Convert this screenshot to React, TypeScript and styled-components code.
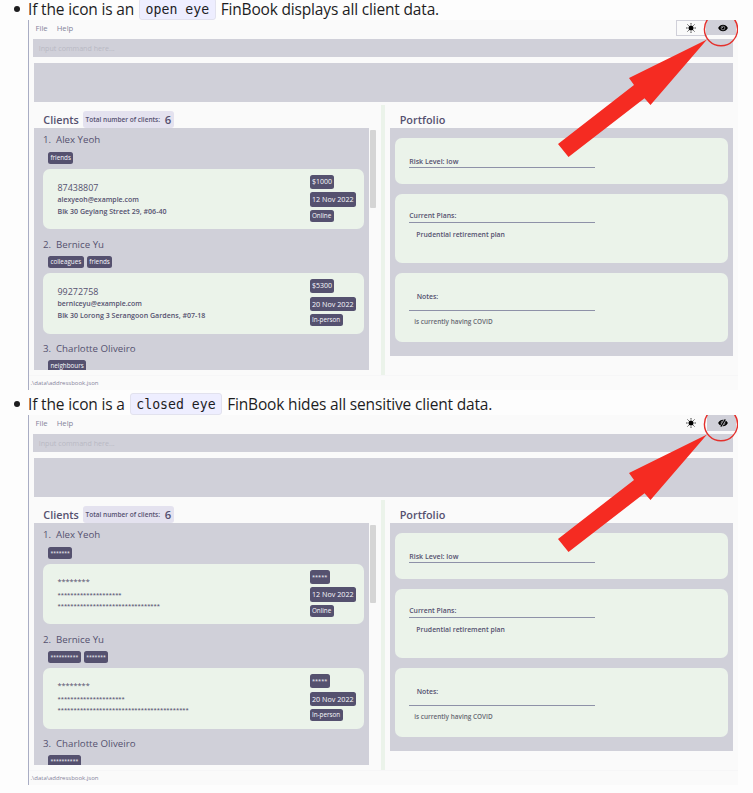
import React from "react";
import styled, { createGlobalStyle } from "styled-components";

const ink = "#55516f";
const slate = "#d0d0d9";
const mint = "#ebf3ea";

const GlobalStyle = createGlobalStyle`
  body {
    margin: 0;
    background: #fdfdfd;
    font-family: "Open Sans", "Noto Sans", sans-serif;
    overflow: hidden;
  }
  *, *::before, *::after { box-sizing: border-box; }
`;

const Page = styled.main`
  width: 753px;
  height: 793px;
`;

const Guide = styled.ul`
  list-style: none;
  margin: 0;
  padding: 0 0 0 28px;
`;

const Step = styled.li<{ $height: number }>`
  height: ${(p) => p.$height}px;
  display: flex;
  flex-direction: column;
  justify-content: flex-end;
`;

const Sentence = styled.p`
  display: flex;
  align-items: center;
  margin: 0 0 0.5px -14px;
  height: 21px;
  font-size: 15.5px;
  line-height: 21px;
  letter-spacing: -0.17px;
  color: #1d1d1f;
  white-space: pre;
`;

const Bullet = styled.span`
  width: 6px;
  height: 6px;
  border-radius: 50%;
  background: #1d1d1f;
  margin-right: 8px;
`;

const Code = styled.code`
  height: 21.5px;
  margin: 0 5px;
  padding: 1px 5.5px 0;
  border: 1px solid #e2e2ee;
  border-radius: 3px;
  background: #eeeeff;
  font: 13.2px/20.5px "DejaVu Sans Mono", monospace;
  letter-spacing: 0;
`;

const Shot = styled.section`
  position: relative;
  flex: none;
  width: 710px;
  height: 370px;
  overflow: hidden;
  display: flex;
  flex-direction: column;
  border-left: 1px solid #a9adc4;
  background: #fafafa;
  color: ${ink};
`;

const MenuBar = styled.nav`
  height: 19px;
  display: flex;
  align-items: flex-start;
  gap: 9px;
  padding: 0 1.7px 0 6.5px;
  font-size: 7.7px;
  line-height: 16px;
  color: #85849b;
`;

const Toggles = styled.div`
  margin-left: auto;
  display: flex;
`;

const ThemeToggle = styled.div<{ $outlined: boolean }>`
  width: 31.5px;
  height: 15.6px;
  padding-left: 8.2px;
  border: 1px solid ${(p) => (p.$outlined ? slate : "transparent")};
  svg { display: block; margin-top: 1px; }
`;

const EyeToggle = styled.div<{ $height: number }>`
  width: 29px;
  height: ${(p) => p.$height}px;
  padding-left: 10.2px;
  background: ${slate};
  svg { display: block; margin-top: 3px; }
`;

const CommandBox = styled.div`
  height: 17.7px;
  margin: 0 5px 0 4px;
  padding-left: 5.7px;
  background: ${slate};
  font-size: 7.15px;
  line-height: 18.5px;
  color: #b9b9c4;
`;

const ResultBox = styled.div`
  height: 39.2px;
  margin: 6.4px 5.3px 3.4px 5px;
  background: ${slate};
`;

const Body = styled.div`
  height: 270.6px;
  display: flex;
`;

const ClientsPane = styled.div`
  width: 352.3px;
  padding-left: 5px;
`;

const PaneHeader = styled.header<{ $indent: number }>`
  height: 22.9px;
  padding: 5.9px 0 0 ${(p) => p.$indent}px;
  display: flex;
  gap: 4.2px;
`;

const PaneTitle = styled.h2<{ $size: number }>`
  margin: 0;
  font-size: ${(p) => p.$size}px;
  font-weight: 600;
  line-height: 17px;
`;

const Total = styled.div`
  height: 17px;
  width: 91px;
  padding-left: 2.6px;
  display: flex;
  gap: 4.7px;
  border-radius: 3px;
  background: #e4e2ef;
  font-size: 6.5px;
  font-weight: 600;
  line-height: 17.4px;
`;

const Count = styled.span`
  font-size: 11.3px;
  line-height: 17.4px;
`;

const ListRow = styled.div`
  display: flex;
  gap: 1px;
`;

const ClientList = styled.div`
  width: 335px;
  height: 241.7px;
  overflow: hidden;
  background: ${slate};
`;

const ScrollThumb = styled.div`
  width: 5.5px;
  height: 78px;
  margin-top: 2px;
  border-radius: 1px;
  background: #d5d5d5;
`;

const ClientItem = styled.article`
  height: 104.3px;
  padding: 0 5px 0 9px;
`;

const ClientName = styled.h3`
  display: flex;
  margin: 0;
  height: 23.3px;
  font-size: 9.7px;
  font-weight: 400;
  line-height: 24.4px;
`;

const Index = styled.span`
  width: 13px;
`;

const Tags = styled.div`
  display: flex;
  gap: 3.3px;
  height: 17.2px;
  padding-left: 5px;
`;

const Chip = styled.span<{ $size: number; $h: number; $masked?: boolean }>`
  height: ${(p) => p.$h}px;
  padding: 0 2.4px;
  border-radius: 2.5px;
  background: ${ink};
  color: #f8f8fc;
  font-size: ${(p) => p.$size}px;
  font-weight: 500;
  line-height: ${(p) => p.$h - 0.1 + (p.$masked ? 0.8 : 0)}px;
  white-space: nowrap;
`;

const ClientCard = styled.div`
  height: 60.5px;
  display: flex;
  border-radius: 7px;
  background: ${mint};
`;

const Details = styled.div`
  width: 266.5px;
  padding: 12px 0 0 14.5px;
`;

const Detail = styled.div<{ $size: number; $h: number; $weight?: number }>`
  height: ${(p) => p.$h}px;
  font-size: ${(p) => p.$size}px;
  font-weight: ${(p) => p.$weight ?? 600};
  line-height: ${(p) => p.$h}px;
  white-space: nowrap;
`;

const Meetings = styled.div`
  padding-top: 6px;
  display: flex;
  flex-direction: column;
  align-items: flex-start;
  gap: 3.2px;
`;

const Divider = styled.div`
  width: 4px;
  background: ${mint};
`;

const PortfolioPane = styled.div`
  flex: 1;
  padding: 0 5.3px 0 5.2px;
`;

const PortfolioPanel = styled.div`
  height: 227.5px;
  padding: 9.8px 4.7px 0 4.7px;
  display: flex;
  flex-direction: column;
  gap: 9.6px;
  background: ${slate};
`;

const PortfolioCard = styled.div<{ $h: number; $top: number }>`
  height: ${(p) => p.$h}px;
  padding: ${(p) => p.$top}px 0 0 14px;
  border-radius: 7px;
  background: ${mint};
`;

const Label = styled.div<{ $size: number; $h: number; $indent?: number }>`
  width: 186px;
  height: ${(p) => p.$h}px;
  padding-left: ${(p) => p.$indent ?? 0}px;
  border-bottom: 1px solid #8e91a8;
  font-size: ${(p) => p.$size}px;
  font-weight: 600;
  line-height: 10px;
`;

const Value = styled.div<{ $size: number; $indent: number; $top: number; $soft?: boolean }>`
  padding: ${(p) => p.$top}px 0 0 ${(p) => p.$indent}px;
  font-size: ${(p) => p.$size}px;
  font-weight: 600;
  line-height: 10px;
  color: ${(p) => (p.$soft ? "#676972" : ink)};
`;

const StatusBar = styled.footer`
  flex: 1;
  border-top: 1px solid #f6f6f7;
  padding-left: 1.5px;
  font-size: 6px;
  line-height: 14px;
  color: #85849b;
`;

const Annotation = styled.svg`
  position: absolute;
  top: 0;
  right: 0;
  width: 184px;
  height: 140px;
`;

function SunIcon() {
  return (
    <svg width="12" height="12" viewBox="-6 -6 12 12">
      <circle r="2.5" />
      {[0, 45, 90, 135, 180, 225, 270, 315].map((a) => (
        <path key={a} d="M3.5 0H4.8" stroke="#000" strokeWidth="0.9" transform={`rotate(${a})`} />
      ))}
    </svg>
  );
}

function EyeIcon({ closed }: { closed: boolean }) {
  return (
    <svg width="10" height="10" viewBox="-5 -5 10 10">
      <path d="M-4.9 0C-3.6 -2.2 -1.9 -3.2 0 -3.2S3.6 -2.2 4.9 0C3.6 2.2 1.9 3.2 0 3.2S-3.6 2.2 -4.9 0Z" />
      <circle r="1.9" fill="none" stroke={slate} strokeWidth="0.6" />
      {closed ? (
        <>
          <path d="M-2.4 4L2.7 -4.2" stroke={slate} strokeWidth="2.3" />
          <path d="M-2.2 3.6L2.3 -3.6" stroke="#000" strokeWidth="1.2" />
        </>
      ) : (
        <circle cx="-0.4" cy="-0.4" r="0.5" fill={slate} />
      )}
    </svg>
  );
}

type Client = {
  name: string;
  tags: string[];
  phone: string;
  email: string;
  address: string;
  premium: string;
  date: string;
  medium: string;
};

const clients: Client[] = [
  {
    name: "Alex Yeoh",
    tags: ["friends"],
    phone: "87438807",
    email: "alexyeoh@example.com",
    address: "Blk 30 Geylang Street 29, #06-40",
    premium: "$1000",
    date: "12 Nov 2022",
    medium: "Online",
  },
  {
    name: "Bernice Yu",
    tags: ["colleagues", "friends"],
    phone: "99272758",
    email: "berniceyu@example.com",
    address: "Blk 30 Lorong 3 Serangoon Gardens, #07-18",
    premium: "$5300",
    date: "20 Nov 2022",
    medium: "In-person",
  },
];

function FinBook({ hidden }: { hidden: boolean }) {
  const mask = (s: string) => (hidden ? "*".repeat(s.length) : s);
  const tag = (t: string) => (
    <Chip key={t} $size={hidden ? 5.05 : 6.3} $h={12.4} $masked={hidden}>
      {mask(t)}
    </Chip>
  );
  return (
    <Shot>
      <MenuBar>
        <span>File</span>
        <span>Help</span>
        <Toggles>
          <ThemeToggle $outlined={!hidden}>
            <SunIcon />
          </ThemeToggle>
          <EyeToggle $height={hidden ? 16 : 15}>
            <EyeIcon closed={hidden} />
          </EyeToggle>
        </Toggles>
      </MenuBar>
      <CommandBox>Input command here...</CommandBox>
      <ResultBox />
      <Body>
        <ClientsPane>
          <PaneHeader $indent={9.3}>
            <PaneTitle $size={10.8}>Clients</PaneTitle>
            <Total>
              Total number of clients: <Count>6</Count>
            </Total>
          </PaneHeader>
          <ListRow>
            <ClientList>
              {clients.map((c, i) => (
                <ClientItem key={c.name}>
                  <ClientName>
                    <Index>{i + 1}.</Index>
                    {c.name}
                  </ClientName>
                  <Tags>{c.tags.map(tag)}</Tags>
                  <ClientCard>
                    <Details>
                      <Detail $size={hidden ? 7.3 : 8.95} $h={13} $weight={500}>{mask(c.phone)}</Detail>
                      <Detail $size={hidden ? 5.85 : 6.95} $h={12.4}>{mask(c.email)}</Detail>
                      <Detail $size={hidden ? 5.85 : 7.07} $h={11.4}>{mask(c.address)}</Detail>
                    </Details>
                    <Meetings>
                      <Chip $size={hidden ? 5.6 : 7} $h={14.4} $masked={hidden}>{mask(c.premium)}</Chip>
                      <Chip $size={7.2} $h={14.4}>{c.date}</Chip>
                      <Chip $size={6.3} $h={12.2}>{c.medium}</Chip>
                    </Meetings>
                  </ClientCard>
                </ClientItem>
              ))}
              <ClientItem>
                <ClientName>
                  <Index>3.</Index>Charlotte Oliveiro
                </ClientName>
                <Tags>{tag("neighbours")}</Tags>
              </ClientItem>
            </ClientList>
            <ScrollThumb />
          </ListRow>
        </ClientsPane>
        <Divider />
        <PortfolioPane>
          <PaneHeader $indent={9.2}>
            <PaneTitle $size={10.9}>Portfolio</PaneTitle>
          </PaneHeader>
          <PortfolioPanel>
            <PortfolioCard $h={46} $top={17.7}>
              <Label $size={7.05} $h={12}>Risk Level: low</Label>
            </PortfolioCard>
            <PortfolioCard $h={69.3} $top={17}>
              <Label $size={6.87} $h={12}>Current Plans:</Label>
              <Value $size={6.85} $indent={7.2} $top={7.5}>Prudential retirement plan</Value>
            </PortfolioCard>
            <PortfolioCard $h={69.3} $top={19.9}>
              <Label $size={6.87} $h={18.7} $indent={7.5}>Notes:</Label>
              <Value $size={6.42} $indent={5} $top={5.6} $soft>is currently having COVID</Value>
            </PortfolioCard>
          </PortfolioPanel>
        </PortfolioPane>
      </Body>
      <StatusBar>.\data\addressbook.json</StatusBar>
      <Annotation viewBox="554 20 184 140">
        <circle cx="721" cy="29.2" r="16.6" fill="none" stroke="#e4302c" strokeWidth="1.4" />
        <path d="M707 39.5L650.5 105L644.5 98.3L568.5 157L558 144L634 85L629 78Z" fill="#f52b22" />
      </Annotation>
    </Shot>
  );
}

export default function App() {
  return (
    <Page>
      <GlobalStyle />
      <Guide>
        <Step $height={390}>
          <Sentence>
            <Bullet />
            <span>If the icon is an</span>
            <Code>open eye</Code>
            <span>FinBook displays all client data.</span>
          </Sentence>
          <FinBook hidden={false} />
        </Step>
        <Step $height={395}>
          <Sentence>
            <Bullet />
            <span>If the icon is a</span>
            <Code>closed eye</Code>
            <span>FinBook hides all sensitive client data.</span>
          </Sentence>
          <FinBook hidden />
        </Step>
      </Guide>
    </Page>
  );
}
